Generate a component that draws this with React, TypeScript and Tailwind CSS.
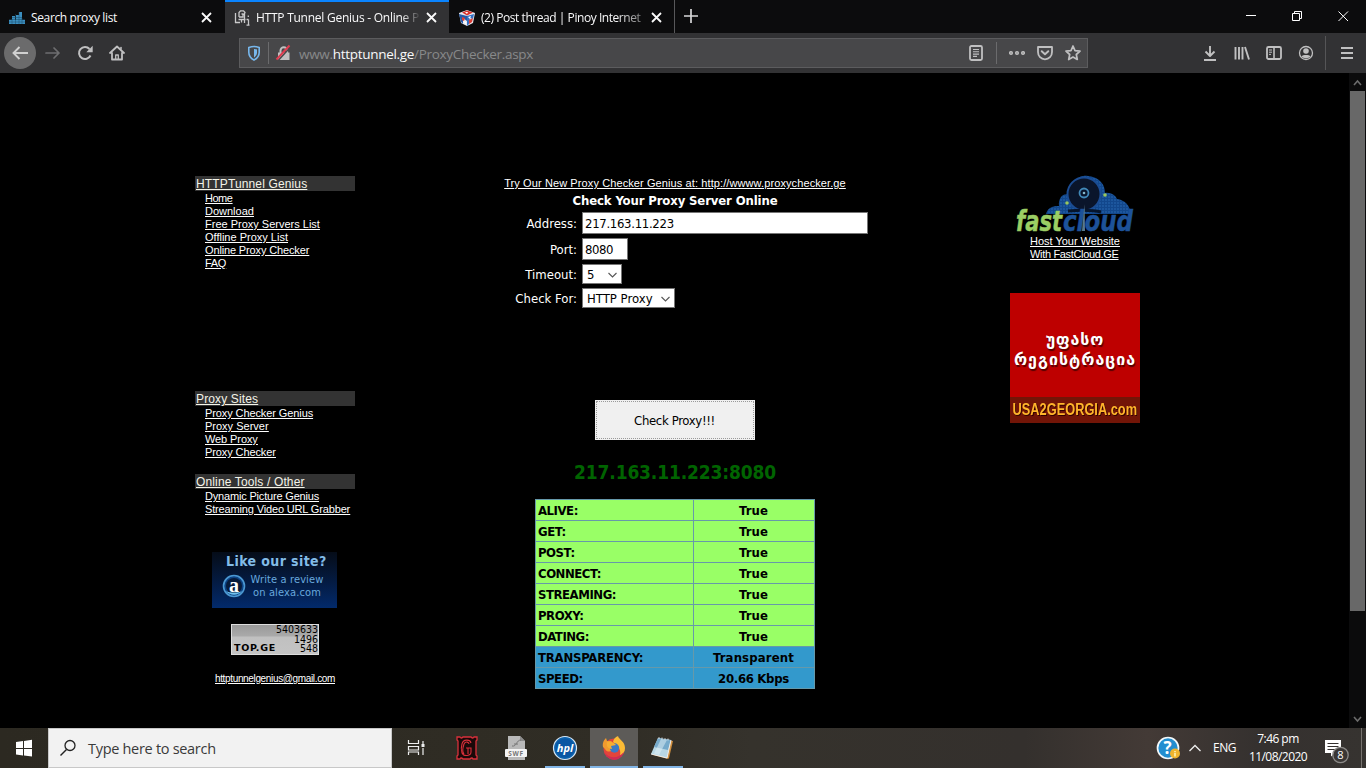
import React from "react";

const arial = "font-['Liberation_Sans',Arial,sans-serif]";
const tahoma = "font-['DejaVu_Sans_Condensed','DejaVu_Sans',sans-serif]";
const segoe = "font-['Open_Sans','Noto_Sans',sans-serif]";

function Close({ className = "" }: { className?: string }) {
  return (
    <svg width="11" height="11" viewBox="0 0 11 11" className={className}>
      <path d="M1 1l9 9M10 1l-9 9" stroke="#fafafa" strokeWidth="1.8" fill="none" />
    </svg>
  );
}

function Tab({ icon, title, active, fade, spacing, pad = "pl-[9px]" }: { icon: React.ReactNode; title: string; active?: boolean; fade?: string; spacing?: string; pad?: string }) {
  return (
    <div
      className={`flex h-[33px] shrink-0 items-center border-t-2 ${pad} ${active ? "w-[224px] border-[#0a84ff] bg-[#323234]" : "w-[225px] border-transparent"}`}
    >
      <div className="h-4 w-4 shrink-0">{icon}</div>
      <div className={`ml-[6px] w-[165px] overflow-hidden text-[12px] leading-[18px] whitespace-nowrap text-[#f9f9fa] ${spacing} ${fade ?? ""}`}>{title}</div>
      <Close className="ml-[5px] shrink-0" />
    </div>
  );
}

function TabStrip() {
  return (
    <div className="flex h-[33px] shrink-0 bg-[#0c0c0d]">
      <Tab
        title="Search proxy list"
        spacing="tracking-[-0.36px]"
        icon={
          <svg width="16" height="16" viewBox="0 0 16 16">
            <g fill="#3b8fc0">
              <path d="M10 2h3v11h-3z M7 5h3v8H7z M3 6h3v7H3z M0 10h16v4H0z" />
            </g>
            <path d="M0 9.5h16M0 12h16M3 7.5h10M6.5 4v10M10 2v12M13 8v6M3 9v5" stroke="#1d4a66" strokeWidth=".5" />
          </svg>
        }
      />
      <Tab
        active
        fade="[mask-image:linear-gradient(to_right,black_88%,transparent)]"
        title="HTTP Tunnel Genius - Online P"
        spacing="tracking-[-0.25px]"
        icon={
          <svg width="16" height="16" viewBox="0 0 16 16" fill="none" stroke="#c9c9ca" strokeWidth="1.3">
            <path d="M1.500 3v10M1 12.500h5M4.500 9.500h7M10.500 4v9M5 7V2.500L6.500 .8h3l1.500 1.700-1 2.500M7.500 4h1.500v3H5M14.500 9.500v5.500M12.500 9.500h2M12.500 15.200h3M14.300 5.500v1.500M7.500 10v2.500" />
          </svg>
        }
      />
      <Tab
        fade="[mask-image:linear-gradient(to_right,black_82%,rgba(0,0,0,.35))]"
        title="(2) Post thread | Pinoy Internet"
        spacing="tracking-[-0.45px]"
        pad="pl-[10px]"
        icon={
          <svg width="16" height="16" viewBox="0 0 16 16">
            <path d="M0 3l8-3 8 3-2 10-6 3-6-3z" fill="#e8e8ef" />
            <path d="M3 2.500l5-2 6 2-6 3z" fill="#d8332c" />
            <path d="M0 4l8 2v5l-4-3v6l-2-2z" fill="#245aa8" />
            <path d="M8 6l7-2-1 5-3-1-1 6-2 2z" fill="#326fc2" />
            <path d="M10 10l4-2-1 4-3 2zM3 7l3 1-1 3-2-1z" fill="#dc3e35" />
            <path d="M6 2l3 0-1 2zM9 7l3-1-1 3zM4 11l3 1v2z" fill="#fff" />
          </svg>
        }
      />
      <div className="h-[33px] w-px bg-[#58585a]" />
      <svg width="32" height="33" viewBox="0 0 32 33" className="shrink-0">
        <path d="M16 9v14M9 16h14" stroke="#d8d8d9" strokeWidth="1.7" />
      </svg>
      <div className="flex-1" />
      <svg width="138" height="32" viewBox="0 0 138 32" className="shrink-0" fill="none" stroke="#fff" strokeWidth="1">
        <path d="M18 15.500h10" />
        <path d="M64.500 13.500h7v7h-7zM66.500 13.500v-2h7v7h-2" />
        <path d="M110.500 11.500l9.500 9.500M120 11.500l-9.500 9.500" />
      </svg>
    </div>
  );
}

function NavIcon({ children, w = "w-8" }: { children: React.ReactNode; w?: string }) {
  return (
    <div className={`flex h-10 shrink-0 items-center justify-center ${w}`}>
      <svg width="16" height="16" viewBox="0 0 16 16" fill="none" stroke="#c0c0c1" strokeWidth="2" strokeLinecap="round" strokeLinejoin="round">
        {children}
      </svg>
    </div>
  );
}

function Toolbar() {
  return (
    <div className="flex h-10 shrink-0 items-center bg-[#323234] pl-1">
      <div className="flex h-8 w-8 items-center justify-center rounded-full bg-[#6b6b6c]">
        <svg width="16" height="16" viewBox="0 0 16 16" fill="none" stroke="#d0d0d0" strokeWidth="1.900">
          <path d="M16 8H1.500M7.500 2L1.500 8l6 6" />
        </svg>
      </div>
      <NavIcon w="w-[34px]">
        <path d="M1 8h13M9 3l5 5-5 5" stroke="#6e6e70" strokeWidth="1.700" />
      </NavIcon>
      <NavIcon w="w-[30px]">
        <path d="M13.500 10.500A6 6 0 1 1 12.500 4" strokeLinecap="butt" />
        <path d="M15.700 .8v6.400H9.300z" fill="#c0c0c1" stroke="none" />
      </NavIcon>
      <NavIcon w="w-[34px]">
        <path d="M1 8l7-6.500L15 8M3 8v6.500h10V8" strokeWidth="1.800" />
        <path d="M12 2.500V4" strokeWidth="1.500" />
        <path d="M6.700 14v-4h2.600v4" strokeWidth="1.300" />
      </NavIcon>
      <div className="ml-[105px] flex h-[30px] w-[849px] shrink-0 items-center border border-[#5c5c5e] bg-[#474749]">
        <svg width="28" height="28" viewBox="0 0 28 28" className="shrink-0">
          <path d="M14 7.500c-1.800 0-3.500.4-5.200 1v4.700c0 3.600 2 6.200 5.200 7.800 3.200-1.600 5.200-4.200 5.200-7.800V8.500c-1.700-.6-3.400-1-5.200-1z" fill="none" stroke="#77b7ec" strokeWidth="1.600" />
          <path d="M14 10c1.300 0 2 .2 3 .5v3c0 2.200-1.200 3.800-3 5z" fill="#77b7ec" />
        </svg>
        <div className="h-[22px] w-px shrink-0 bg-[#6b6b6d]" />
        <svg width="29" height="28" viewBox="0 0 29 28" className="ml-[1px] shrink-0">
          <path d="M8 13.500h11.500V21H8z" fill="#c0c0c1" />
          <path d="M10.500 14v-2.500a3.300 3.300 0 0 1 6.600 0V14" fill="none" stroke="#c0c0c1" strokeWidth="2" />
          <path d="M8.200 21.500L20.500 8" stroke="#474749" strokeWidth="1.500" />
          <path d="M6.500 20.500L19.500 6.500" stroke="#de3c50" strokeWidth="2" />
        </svg>
        <div className="pt-px text-[13.500px] leading-5 tracking-[-0.3px] whitespace-nowrap text-[#87898a]">
          www.<span className="text-[#f9f9fa]">httptunnel.ge</span>/ProxyChecker.aspx
        </div>
        <div className="flex-1" />
        <NavIcon w="w-[30px]">
          <rect x="2" y="1" width="12" height="14" rx="1.500" strokeWidth="1.800" />
          <path d="M5 4.500h6M5 6.800h6M5 9.100h6M5 11.400h4" strokeWidth="1.100" strokeLinecap="butt" />
        </NavIcon>
        <div className="ml-[5px] h-[22px] w-px shrink-0 bg-[#6b6b6d]" />
        <NavIcon w="w-10">
          <g strokeWidth="1.300">
            <circle cx="2" cy="8" r="1.400" fill="#888" />
            <circle cx="8" cy="8" r="1.400" fill="#888" />
            <circle cx="14" cy="8" r="1.400" fill="#888" />
          </g>
        </NavIcon>
        <NavIcon w="w-4">
          <path d="M1 2h14v5c0 4.200-3 7.300-7 7.300S1 11.200 1 7z" strokeWidth="1.800" />
          <path d="M4.700 6.200L8 9.300l3.300-3.100" strokeWidth="1.900" />
        </NavIcon>
        <NavIcon w="ml-3 mr-1.5 w-4">
          <path d="M8 1l2 4.600 5 .5-3.700 3.400 1 5L8 12l-4.300 2.500 1-5L1 6.100l5-.5z" strokeWidth="1.700" />
        </NavIcon>
      </div>
      <div className="flex-1" />
      <NavIcon>
        <path d="M8 1v9.500M3.500 6.500L8 11l4.500-4.500M2 15h12" strokeWidth="1.900" strokeLinecap="butt" />
      </NavIcon>
      <NavIcon>
        <path d="M1.500 2v12.500M5 2v12.500M8.500 2v12.500M11 2l4 12.500" strokeWidth="1.900" strokeLinecap="butt" />
      </NavIcon>
      <NavIcon>
        <rect x="1" y="2" width="14" height="12" rx="1.500" strokeWidth="1.800" />
        <path d="M8 2v12" strokeWidth="1.600" />
        <path d="M3 5h3M3 7.200h3M3 9.400h2" strokeWidth="1" strokeLinecap="butt" />
      </NavIcon>
      <NavIcon>
        <circle cx="8" cy="8" r="6.500" strokeWidth="1.300" />
        <circle cx="8" cy="6" r="2.800" fill="#c0c0c1" stroke="none" />
        <path d="M3.500 11.500C5 9.600 11 9.600 12.500 11.500 10.800 13.800 5.200 13.800 3.500 11.500z" fill="#c0c0c1" stroke="none" />
      </NavIcon>
      <div className="ml-[3px] h-[34px] w-px bg-[#555557]" />
      <NavIcon w="w-10 pl-[2px]">
        <path d="M2 3h12M2 8h12M2 13h12" strokeLinecap="butt" />
      </NavIcon>
    </div>
  );
}

type Item = [text: string, spacing: string];

function LinkGroup({ title, items, className = "" }: { title: string; items: Item[]; className?: string }) {
  return (
    <div className={className}>
      <div className="h-[15px] bg-[#333] pl-px text-[12px] leading-[16px] tracking-[0.14px] text-[#f4f4e8] underline">{title}</div>
      <div className="flex flex-col items-start pt-px pl-[10px] text-[11px] leading-[13px] whitespace-nowrap text-white underline">
        {items.map(([text, spacing]) => (
          <a key={text} className={spacing}>
            {text}
          </a>
        ))}
      </div>
    </div>
  );
}

function Sidebar() {
  return (
    <div className={`ml-[195px] w-[160px] shrink-0 pt-[103px] ${arial}`}>
      <LinkGroup
        className="h-[215px]"
        title="HTTPTunnel Genius"
        items={[
          ["Home", "tracking-[-0.5px]"],
          ["Download", ""],
          ["Free Proxy Servers List", ""],
          ["Offline Proxy List", ""],
          ["Online Proxy Checker", "tracking-[-0.14px]"],
          ["FAQ", "tracking-[-0.3px]"],
        ]}
      />
      <LinkGroup
        className="h-[83px]"
        title="Proxy Sites"
        items={[
          ["Proxy Checker Genius", "tracking-[-0.1px]"],
          ["Proxy Server", ""],
          ["Web Proxy", "tracking-[-0.1px]"],
          ["Proxy Checker", "tracking-[-0.1px]"],
        ]}
      />
      <LinkGroup
        className="h-[78px]"
        title="Online Tools / Other"
        items={[
          ["Dynamic Picture Genius", "tracking-[-0.18px]"],
          ["Streaming Video URL Grabber", "tracking-[-0.15px]"],
        ]}
      />
      <div className={`ml-[17px] h-[56px] w-[125px] bg-gradient-to-b from-[#050c18] via-[#041a40] to-[#022a6b] ${tahoma}`}>
        <div className="pt-px pl-[14px] text-[14px] leading-[17px] font-bold tracking-[0.4px] whitespace-nowrap text-[#82bce8]">Like our site?</div>
        <div className="flex">
          <svg width="24" height="24" viewBox="0 0 24 24" className="mt-[4px] ml-[10px] shrink-0">
            <circle cx="12" cy="12" r="10.500" fill="#0d4384" stroke="#4b98d2" strokeWidth="1.600" />
            <circle cx="12" cy="12" r="8" fill="#071b3b" />
            <path d="M4 17c4 5 12 5 16 0-3 2-13 2-16 0z" fill="#6ec0ee" />
            <text x="12" y="18" textAnchor="middle" fontSize="20" fontWeight="bold" fill="#fff" fontFamily="Liberation Serif">
              a
            </text>
          </svg>
          <div className="ml-[2px] w-[78px] pt-[3px] text-center text-[11px] leading-[13px] tracking-[0.12px] whitespace-nowrap text-[#68a9df]">
            Write a review
            <br />
            on alexa.com
          </div>
        </div>
      </div>
      <div className="mt-4 ml-[36px] flex h-[31px] w-[88px] items-end justify-between border border-[#ddd] bg-[linear-gradient(to_bottom,#999_0,#aaa_11px,#c0c0c0_12px,#c4c4c4_100%)] px-[2px] text-black">
        <span className="pb-px font-['DejaVu_Sans',sans-serif] text-[9.500px] leading-[10px] font-bold tracking-[0.7px]">TOP.GE</span>
        <div className="-mr-px h-[29px] text-right font-['DejaVu_Sans_Condensed',sans-serif] text-[10.500px] leading-[9.600px]">
          5403633
          <br />
          1496
          <br />
          548
        </div>
      </div>
      <div className="mt-[17px] text-center text-[10px] leading-[13px] tracking-[-0.35px] whitespace-nowrap text-white underline">httptunnelgenius@gmail.com</div>
    </div>
  );
}

function Chevron() {
  return (
    <svg width="9" height="6" viewBox="0 0 9 6" className="shrink-0">
      <path d="M.5 1l4 4 4-4" fill="none" stroke="#555" strokeWidth="1.100" />
    </svg>
  );
}

function Field({ label, children, gap }: { label: string; children: React.ReactNode; gap: string }) {
  return (
    <div className={`flex items-center ${gap}`}>
      <div className="w-[95px] pt-[2px] text-right text-[13px] leading-4 whitespace-nowrap text-white">{label}</div>
      <div className="ml-[5px] text-[13px] leading-4 text-black">{children}</div>
    </div>
  );
}

const results = [
  ["ALIVE:", "True"],
  ["GET:", "True"],
  ["POST:", "True"],
  ["CONNECT:", "True"],
  ["STREAMING:", "True"],
  ["PROXY:", "True"],
  ["DATING:", "True"],
  ["TRANSPARENCY:", "Transparent"],
  ["SPEED:", "20.66 Kbps"],
];

function Checker() {
  return (
    <div className={`ml-[127px] flex w-[386px] shrink-0 flex-col items-center pt-[103px] ${tahoma}`}>
      <div className={`text-[11px] leading-[15px] tracking-[0.1px] whitespace-nowrap text-white underline ${arial}`}>Try Our New Proxy Checker Genius at: http://wwww.proxychecker.ge</div>
      <div className="mt-[1px] text-[13px] leading-[17px] font-bold tracking-[-0.13px] whitespace-nowrap text-white">Check Your Proxy Server Online</div>
      <div className="mt-[3px] w-full">
        <Field label="Address:" gap="mb-1">
          <div className="flex h-[22px] w-[286px] items-center border border-[#767676] bg-white pt-px pl-[2px] tracking-[-0.300px]">217.163.11.223</div>
        </Field>
        <Field label="Port:" gap="mb-1">
          <div className="flex h-[22px] w-[46px] items-center border border-[#767676] bg-white pt-px pl-[2px] tracking-[-0.400px]">8080</div>
        </Field>
        <Field label="Timeout:" gap="mb-1">
          <div className="flex h-5 w-10 items-center justify-between border border-[#767676] bg-white pt-px pr-1 pl-1">
            5<Chevron />
          </div>
        </Field>
        <Field label="Check For:" gap="mb-0">
          <div className="flex h-5 w-[93px] items-center justify-between border border-[#767676] bg-white pt-px pr-1 pl-1 whitespace-nowrap">
            HTTP Proxy
            <Chevron />
          </div>
        </Field>
      </div>
      <div className="mt-[92px] h-10 w-[160px] bg-[#f0f0f0] p-px">
        <div className="flex h-full w-full items-center justify-center border border-dotted border-[#9a9a9a] pt-px pr-px text-[13px] tracking-[-0.35px] text-black">Check Proxy!!!</div>
      </div>
      <div className="mt-[20px] text-[19px] leading-6 font-bold tracking-[-0.15px] whitespace-nowrap text-[#006400]">217.163.11.223:8080</div>
      <div className="mt-[15px] flex h-[190px] w-[280px] flex-col gap-px border border-[#6699aa] bg-[#6699aa]">
        {results.map(([k, v], i) => (
          <div key={k} className={`flex h-5 text-[13px] leading-[21px] font-bold text-black ${i > 6 ? "bg-[#3399cc]" : "bg-[#99ff66]"}`}>
            <div className={`w-[158px] border-r border-[#6699aa] pl-[2px] ${i === 7 ? "tracking-[-0.220px]" : "tracking-[-0.450px]"}`}>{k}</div>
            <div className={`flex-1 pr-px text-center ${i === 8 ? "tracking-[-0.300px]" : i === 7 ? "tracking-[0.150px]" : "tracking-[0.1px]"}`}>{v}</div>
          </div>
        ))}
      </div>
    </div>
  );
}

function FastCloud() {
  return (
    <svg width="120" height="60" viewBox="0 0 120 60" className="overflow-visible">
      <defs>
        <pattern id="dots" width="3" height="3" patternUnits="userSpaceOnUse">
          <rect width="3" height="3" fill="#12478c" />
          <circle cx="1" cy="1" r=".8" fill="#2969b4" />
        </pattern>
      </defs>
      <path d="M31 39c2-7 7-8 13-8-1-9 5-14 11-11C58 2 67 0 73 1c12 1 17 9 17 17 6-1 11 3 12 6 8 1 14 7 13 15z" fill="url(#dots)" />
      <circle cx="69" cy="19" r="16.500" fill="#0a152b" stroke="#1b4c92" strokeWidth="2" />
      <circle cx="69" cy="18" r="4.500" fill="none" stroke="#4188b7" strokeWidth="1.800" />
      <circle cx="69" cy="18" r="1.300" fill="#83b8cc" />
      <circle cx="52" cy="28" r="1.800" fill="#9ac85f" />
      <circle cx="90" cy="20" r="1.800" fill="#9ac85f" />
      <path d="M53 36c12-1 25-1 33 1" stroke="#06152c" strokeWidth="3" fill="none" />
      <g fontFamily="DejaVu Sans" fontStyle="italic" fontWeight="bold" fontSize="29" strokeWidth=".5">
        <text x="1" y="56" textLength="46" lengthAdjust="spacingAndGlyphs" fill="#9bce64" stroke="#9bce64">
          fast
        </text>
        <text x="48" y="56" textLength="70" lengthAdjust="spacingAndGlyphs" fill="#1d5299" stroke="#1d5299">
          cloud
        </text>
      </g>
      <path d="M67 56l2.500-27 .5 27z" fill="#58798f" />
    </svg>
  );
}

function Ads() {
  return (
    <div className={`ml-[142px] flex w-[130px] shrink-0 flex-col items-center pt-[102px] ${arial}`}>
      <FastCloud />
      <div className="flex w-[90px] flex-col items-start text-[11px] leading-[13px] whitespace-nowrap text-white underline">
        <span className="tracking-[-0.02px]">Host Your Website</span>
        <span className="tracking-[-0.33px]">With FastCloud.GE</span>
      </div>
      <div className="mt-[32px] flex h-[130px] w-[130px] flex-col bg-[#be0000] text-center">
        <div className="flex-1 pt-[37px] font-['DejaVu_Sans',sans-serif] text-[16px] leading-[20px] font-bold whitespace-nowrap text-white [text-shadow:1px_2px_1px_#500]">
          <div className="tracking-[0.900px]">უფასო</div>
          <div className="tracking-[1px]">რეგისტრაცია</div>
        </div>
        <div className="flex h-[26px] items-center justify-center bg-[#721507] text-[16px] font-bold whitespace-nowrap text-[#ffb52b] [text-shadow:1px_1px_0_#300]">
          <span className="-mx-4 inline-block scale-x-[0.8]">USA2GEORGIA.com</span>
        </div>
      </div>
    </div>
  );
}

function ScrollBar() {
  return (
    <div className="flex h-full w-[17px] shrink-0 flex-col items-center bg-[#0b0b0c]">
      <svg width="17" height="18" viewBox="0 0 17 18">
        <path d="M5 12l3.500-4 3.500 4" fill="none" stroke="#6c6c6c" strokeWidth="1.600" />
      </svg>
      <div className="h-[520px] w-[15px] bg-[#686868]" />
      <div className="flex-1" />
      <svg width="17" height="18" viewBox="0 0 17 18">
        <path d="M5 7l3.500 4L12 7" fill="none" stroke="#6c6c6c" strokeWidth="1.600" />
      </svg>
    </div>
  );
}

function Task({ children, className = "", bar = "" }: { children: React.ReactNode; className?: string; bar?: string }) {
  return (
    <div className={`flex h-10 w-12 shrink-0 flex-col items-center ${className}`}>
      <svg width="26" height="26" viewBox="0 0 26 26" className="mt-[7px] mb-[5px]">
        {children}
      </svg>
      <div className={`h-[2px] ${bar}`} />
    </div>
  );
}

function TaskBar() {
  return (
    <div className="flex h-10 shrink-0 bg-[linear-gradient(to_right,#2c2921_0,#302d25_45%,#35322c_55%,#34302d_75%,#433a36_84%,#35312f_92%,#363330_100%)]">
      <svg width="48" height="40" viewBox="0 0 48 40" className="shrink-0">
        <path d="M16 14l7-1v7h-7zM24 12.900l8-1.100V20h-8zM16 21h7v6.600l-7-1zM24 21h8v7.600l-8-1z" fill="#fff" />
      </svg>
      <div className="flex h-10 w-[344px] shrink-0 items-center border border-[#c8c8c8] bg-[#f2f2f2] text-[#3a3a3a]">
        <svg width="18" height="18" viewBox="0 0 18 18" className="ml-[10px]">
          <circle cx="11" cy="6.500" r="5" fill="none" stroke="#222" strokeWidth="1.300" />
          <path d="M7.500 10.500L1.500 16.500" stroke="#222" strokeWidth="1.400" />
        </svg>
        <div className="ml-[11px] pt-px text-[14.500px] leading-5 tracking-[-0.3px] whitespace-nowrap">Type here to search</div>
      </div>
      <Task>
        <path d="M5.500 5v3.500h10V5M5.500 20v-3h10v3M5.500 11.500h10v3.500h-10z" fill="none" stroke="#eee" strokeWidth="1.200" />
        <path d="M20 6v4M20 13v7" fill="none" stroke="#eee" strokeWidth="1.200" />
        <path d="M18.500 9h3v3h-3z" fill="#eee" />
      </Task>
      <Task className="ml-[3px]">
        <path d="M3 2h3q1 2 3 0h8q2 2 3 0h3v3l-1 1v14l1 1v3h-4q-1-2-3 0h-7q-2-2-3 0H3v-3l1-1V6L3 5z" fill="#1a0909" stroke="#d8303b" strokeWidth="1.300" />
        <path d="M17 8c-1-4-8-4-9 1-1 3-1 6 0 9 2 4 9 3 9-1v-4h-5M10 9c2-4 5-1 5 0M10 19c-2-2-1-7 0-10M14 13v6" fill="none" stroke="#d8303b" strokeWidth="1.100" />
      </Task>
      <Task className="ml-px">
        <path d="M5 1h12l5 5v19H5z" fill="#b9b9b9" />
        <path d="M17 1v5h5z" fill="#8c8c8c" />
        <path d="M9 11c5 1 4-6 9-6M11 9h4" fill="none" stroke="#777" />
        <rect x="2" y="14" width="22" height="8" rx="1" fill="#f4f4f4" />
        <text x="13" y="20.500" textAnchor="middle" fontSize="6.500" fontWeight="bold" fontFamily="Open Sans" fill="#777" letterSpacing=".7">
          SWF
        </text>
      </Task>
      <Task className="ml-px" bar="w-10 bg-[#82b5e6]">
        <circle cx="13" cy="13" r="11.500" fill="#0c63ae" stroke="#d7e6f4" strokeWidth="1.200" />
        <circle cx="13" cy="13" r="9.500" fill="#0956a3" />
        <text x="13" y="17" textAnchor="middle" fontSize="11" fontWeight="bold" fontStyle="italic" fontFamily="Open Sans" fill="#fff">
          hpl
        </text>
      </Task>
      <Task className="ml-px bg-[#5d5b58]" bar="w-12 bg-[#82b5e6]">
        <circle cx="13" cy="14" r="10.500" fill="#e2453b" />
        <path d="M2 12C1 7 4 4 5 3l1 3 5 0-3 4 4 3c0 4-6 5-8 1z" fill="#f29a2e" />
        <path d="M12 7c1-4 3-5 5-6 1 4 7 5 7 12 0 4-2 6-5 8 1-5 0-9-7-14z" fill="#fbbb35" />
        <circle cx="13.500" cy="13" r="4.700" fill="#3b79c5" />
        <path d="M6 7c4-1 7 0 9 3l-5 1 1 3c-4 0-6-3-5-7z" fill="#f7ad32" />
        <path d="M3 17c5 7 14 7 20 0-4 11-16 10-20 0z" fill="#cf2c54" />
      </Task>
      <Task className="ml-px" bar="w-10 bg-[#82b5e6]">
        <path d="M9 4l14 2-4 17-1 1-15-4z" fill="#d3913f" />
        <path d="M8 3l13 2-4 18-16-4z" fill="#b9d8e6" />
        <path d="M8 3l13 2-3 10-14-3z" fill="#76aacb" />
        <path d="M11 4l6 1-8 15-5-1.500z" fill="#e4f2f7" opacity=".5" />
        <path d="M1 19l16 4 4-18" fill="none" stroke="#eee" strokeWidth="1" />
        <path d="M9 2v2M12 2.500v2M15 3v2M18 3.500v2" stroke="#eee" strokeWidth=".8" />
      </Task>
      <div className="flex-1" />
      <svg width="26" height="26" viewBox="0 0 26 26" className="mt-2 mr-[7px] shrink-0">
        <circle cx="12" cy="12" r="10.500" fill="#238ed0" stroke="#f4f8fa" strokeWidth="1.700" />
        <text x="11.500" y="18" textAnchor="middle" fontSize="17" fontWeight="bold" fontFamily="Open Sans" fill="#fff">
          ?
        </text>
        <circle cx="19" cy="17.500" r="5" fill="#efb42e" />
        <path d="M19 15v1.200M19 17v3.500" stroke="#fff1b0" strokeWidth="1.600" />
      </svg>
      <svg width="12" height="40" viewBox="0 0 12 40" className="mr-3 shrink-0">
        <path d="M.5 23L6 17.500 11.500 23" fill="none" stroke="#eee" strokeWidth="1.300" />
      </svg>
      <div className="w-[25px] pt-[10px] text-[12px] leading-[20px] tracking-[-0.45px] whitespace-nowrap text-white">ENG</div>
      <div className="ml-px w-[78px] pt-[2px] text-center text-[12px] leading-[18px] tracking-[-0.55px] whitespace-nowrap text-white">
        7:46 pm
        <br />
        11/08/2020
      </div>
      <svg width="40" height="40" viewBox="0 0 40 40" className="shrink-0">
        <path d="M8 12h16v13h-6l-4 3.500V25H8z" fill="#fff" />
        <path d="M10.500 15.500h11M10.500 18.500h11M10.500 21.500h11" stroke="#35312f" strokeWidth="1" />
        <circle cx="23.500" cy="27" r="7.700" fill="#3a3735" stroke="#8d8b89" strokeWidth="1.300" />
        <text x="23.500" y="31" textAnchor="middle" fontSize="11" fontFamily="Open Sans" fill="#fff">
          8
        </text>
      </svg>
      <div className="ml-[4px] h-10 w-px shrink-0 bg-[#77736f]" />
      <div className="w-1 shrink-0" />
    </div>
  );
}

export default function App() {
  return (
    <div className={`flex h-[768px] w-[1366px] flex-col overflow-hidden bg-black ${segoe}`}>
      <TabStrip />
      <Toolbar />
      <main className="flex h-[655px] shrink-0 bg-black">
        <Sidebar />
        <Checker />
        <Ads />
        <div className="flex-1" />
        <ScrollBar />
      </main>
      <TaskBar />
    </div>
  );
}
